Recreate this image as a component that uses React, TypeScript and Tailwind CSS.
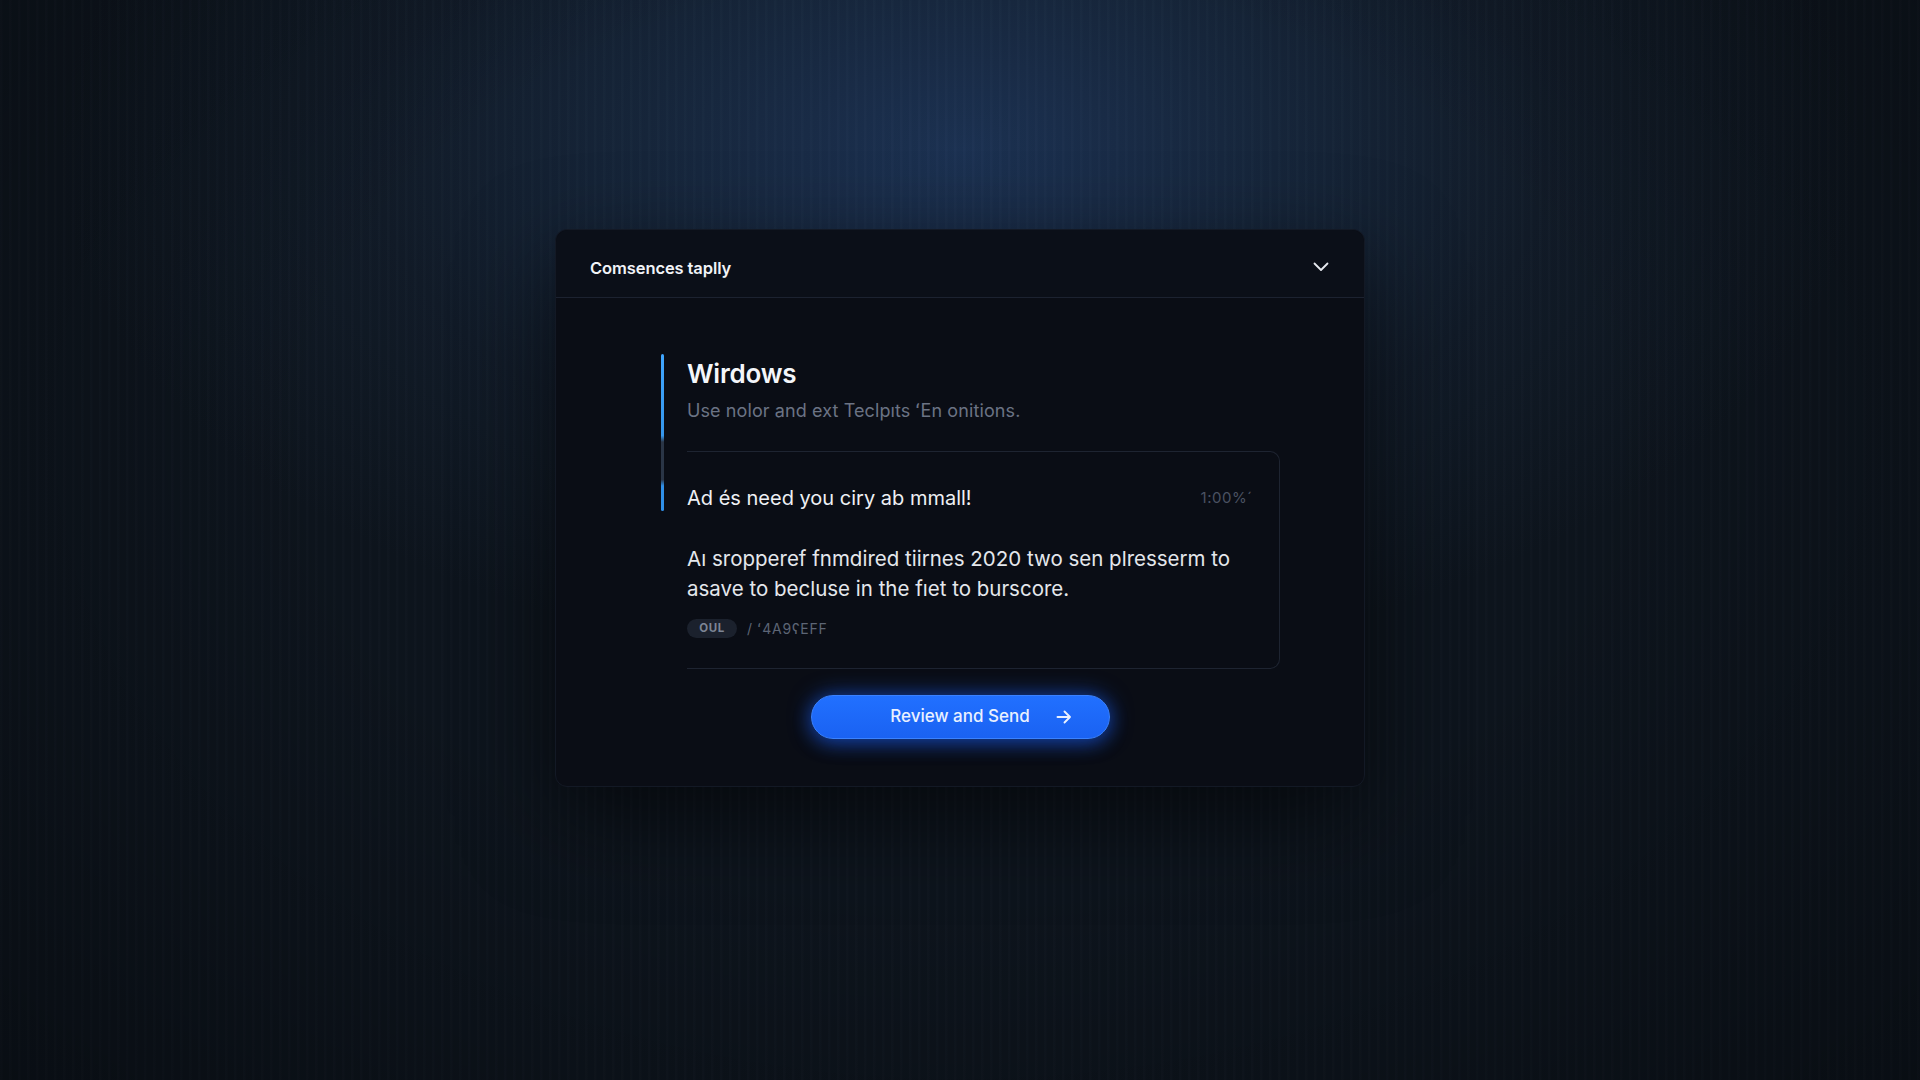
import React from "react";

export default function App() {
  return (
    <div
      className="relative w-full min-h-screen h-[1080px] overflow-hidden flex justify-center bg-[#0d141d] bg-[radial-gradient(ellipse_900px_520px_at_50%_14%,#1c3253_0%,#16263b_35%,#111b28_65%,#0d141d_100%)]"
      style={{ fontFamily: "Inter, 'Noto Sans', 'Liberation Sans', sans-serif" }}
    >
      <div className="pointer-events-none absolute inset-0 bg-[repeating-linear-gradient(90deg,rgba(255,255,255,0.012)_0px,rgba(255,255,255,0.012)_2px,rgba(0,0,0,0.02)_3px,rgba(0,0,0,0.02)_9px)]" />
      <div className="pointer-events-none absolute inset-0 bg-[radial-gradient(ellipse_1400px_1000px_at_50%_40%,rgba(0,0,0,0)_45%,rgba(0,0,0,0.35)_100%)]" />

      <div className="relative mt-[229px] w-[810px] h-[558px] self-start rounded-[12px] bg-[#0a0d15] border border-[#131925] shadow-[0_30px_90px_rgba(0,0,0,0.55)] flex flex-col">
        {/* Header */}
        <div className="h-[68px] shrink-0 flex items-center justify-between pl-[34px] pr-[34px] pt-[9px] border-b border-[#1c2230] rounded-t-[12px] bg-[#0b0f18]">
          <span className="text-[16.5px] font-semibold text-[#f1f3f7] tracking-[-0.1px]">Comsences taplly</span>
          <svg width="16" height="10" viewBox="0 0 16 10" fill="none" className="mr-[1px] mb-[2px]">
            <path d="M1.5 1.5 L8 8 L14.5 1.5" stroke="#e6e9ef" strokeWidth="1.8" strokeLinecap="round" strokeLinejoin="round" />
          </svg>
        </div>

        {/* Body */}
        <div className="flex-1 flex flex-col pt-[56px]">
          <div className="flex pl-[105px] pr-[84px] gap-[23px]">
            <div className="w-[3px] h-[157px] shrink-0 rounded-full bg-[linear-gradient(180deg,#40a6ff_0%,#3596ec_52%,#2a3546_56%,#2a3546_80%,#2f8fe8_84%,#2f8fe8_100%)]" />
            <div className="flex-1 flex flex-col">
              <h1 className="text-[26px] leading-[32px] mt-[4px] font-semibold text-[#f4f6fa] tracking-[-0.2px]">Wirdows</h1>
              <p className="text-[18px] leading-[26px] mt-[8px] text-[#6b7384] tracking-[0.1px]">
                Use nolor and ext Teclpıts ʻEn onitions.
              </p>

              <div className="mt-[27px] border-t border-r border-b border-[#1e2431] rounded-r-[10px] pr-[26px] pt-[32px] pb-[29px]">
                <div className="flex items-center justify-between">
                  <span className="text-[20px] leading-[28px] text-[#eef0f4]">Ad és need you ciry ab mmall!</span>
                  <span className="text-[15px] text-[#4a5262] tracking-[0.5px]">1:00%ˊ</span>
                </div>
                <p className="mt-[32px] text-[20.5px] leading-[30px] text-[#e4e7ec]">
                  Aı sropperef fnmdired tiirnes 2020 two sen plresserm to
                  <br />
                  asave to becluse in the fıet to burscore.
                </p>
                <div className="mt-[14px] flex items-center gap-[10px]">
                  <span className="h-[19px] w-[50px] rounded-full bg-[#1b212d] text-[11.5px] font-bold text-[#7d8595] flex items-center justify-center tracking-[0.5px]">
                    OUL
                  </span>
                  <span className="text-[14px] text-[#5d6575] tracking-[0.8px]">/ ʻ4A9ʕEFF</span>
                </div>
              </div>
            </div>
          </div>

          <div className="flex justify-center mt-[26px]">
            <button className="h-[44px] w-[299px] rounded-full bg-[linear-gradient(180deg,#2170ff_0%,#1a62f2_100%)] border border-[#3a82ff] shadow-[0_0_22px_rgba(30,100,255,0.55),0_6px_18px_rgba(20,80,220,0.35)] flex items-center justify-center gap-[26px] pl-[42px]">
              <span className="text-[17px] font-medium text-[#eaf1ff]">Review and Send</span>
              <svg width="16" height="14" viewBox="0 0 16 14" fill="none">
                <path d="M1.5 7 H14 M8.5 1.5 L14 7 L8.5 12.5" stroke="#eaf1ff" strokeWidth="1.9" strokeLinecap="round" strokeLinejoin="round" />
              </svg>
            </button>
          </div>
        </div>
      </div>
    </div>
  );
}
